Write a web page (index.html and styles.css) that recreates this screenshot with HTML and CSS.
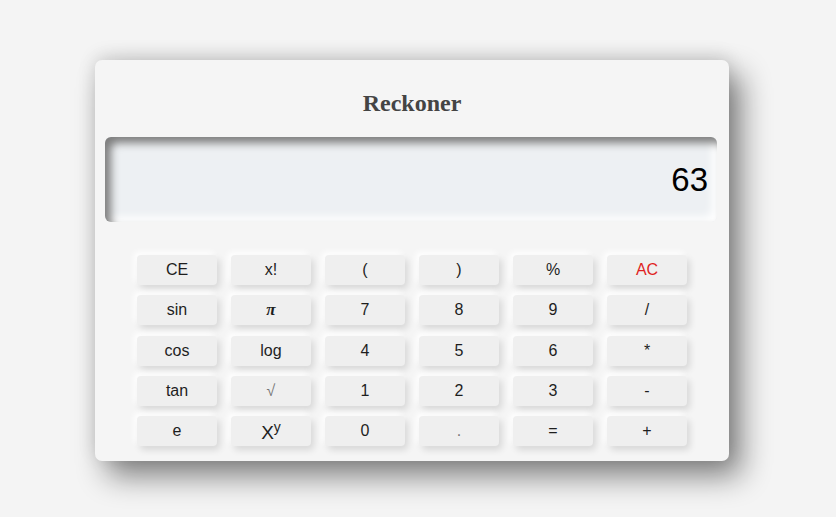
FILE: index.html
```html
<!DOCTYPE html>
<html>
<head>
<meta charset="utf-8">
<link rel="stylesheet" href="styles.css">
</head>
<body>
<div class="calc">
  <h1 class="title">Reckoner</h1>
  <div class="display">63</div>
  <div class="keys">
    <button class="key">CE</button>
    <button class="key">x!</button>
    <button class="key">(</button>
    <button class="key">)</button>
    <button class="key">%</button>
    <button class="key red">AC</button>
    <button class="key">sin</button>
    <button class="key pi">π</button>
    <button class="key">7</button>
    <button class="key">8</button>
    <button class="key">9</button>
    <button class="key">/</button>
    <button class="key">cos</button>
    <button class="key">log</button>
    <button class="key">4</button>
    <button class="key">5</button>
    <button class="key">6</button>
    <button class="key">*</button>
    <button class="key">tan</button>
    <button class="key light">√</button>
    <button class="key">1</button>
    <button class="key">2</button>
    <button class="key">3</button>
    <button class="key">-</button>
    <button class="key">e</button>
    <button class="key pow">X<sup>y</sup></button>
    <button class="key">0</button>
    <button class="key light">.</button>
    <button class="key">=</button>
    <button class="key">+</button>
  </div>
</div>
</body>
</html>
```
FILE: styles.css
```css
html, body {
  margin: 0;
  padding: 0;
  background: #f4f4f4;
  height: 100%;
}
body {
  padding-top: 60px;
  padding-left: 95px;
  box-sizing: border-box;
  font-family: "Liberation Sans", Arial, sans-serif;
}
.calc {
  width: 634px;
  height: 401px;
  box-sizing: border-box;
  background: #f5f5f5;
  border-radius: 7px;
  padding: 10px 12px 15px 10px;
  box-shadow: 12px 15px 30px rgba(0,0,0,0.48), 0 -4px 18px rgba(0,0,0,0.12);
}
.title {
  margin: 0 0 1px;
  font-family: "Liberation Serif", "Times New Roman", serif;
  font-weight: bold;
  font-size: 24px;
  line-height: 66px;
  color: #444;
  text-align: center;
  padding-left: 2px;
}
.display {
  height: 85px;
  border-radius: 6px;
  background: #edf0f3;
  box-shadow: inset 6px 6px 8px #7d7d7d, inset -5px -5px 8px #ffffff;
  font-size: 33px;
  line-height: 85px;
  text-align: right;
  padding-right: 9px;
  color: #000;
}
.keys {
  margin: 33px 30px 0 32px;
  display: grid;
  grid-template-columns: repeat(6, 80px);
  grid-auto-rows: 30px;
  column-gap: 14px;
  row-gap: 10.25px;
}
.key {
  border: none;
  background: #efefef;
  border-radius: 4px;
  font-family: "Liberation Sans", Arial, sans-serif;
  font-size: 16px;
  color: #1e1e1e;
  padding: 0;
  box-shadow: 3px 4px 7px rgba(0,0,0,0.12), -3px -3px 6px #ffffff;
}
.red { color: #e01f1f; }
.light { color: #777; }
.pi {
  font-family: "Liberation Serif", "Times New Roman", serif;
  font-weight: bold;
  font-style: italic;
  font-size: 17px;
}
.pow {
  font-size: 19px;
  line-height: 1;
}
.pow sup {
  font-size: 14px;
  vertical-align: 7px;
}
```
